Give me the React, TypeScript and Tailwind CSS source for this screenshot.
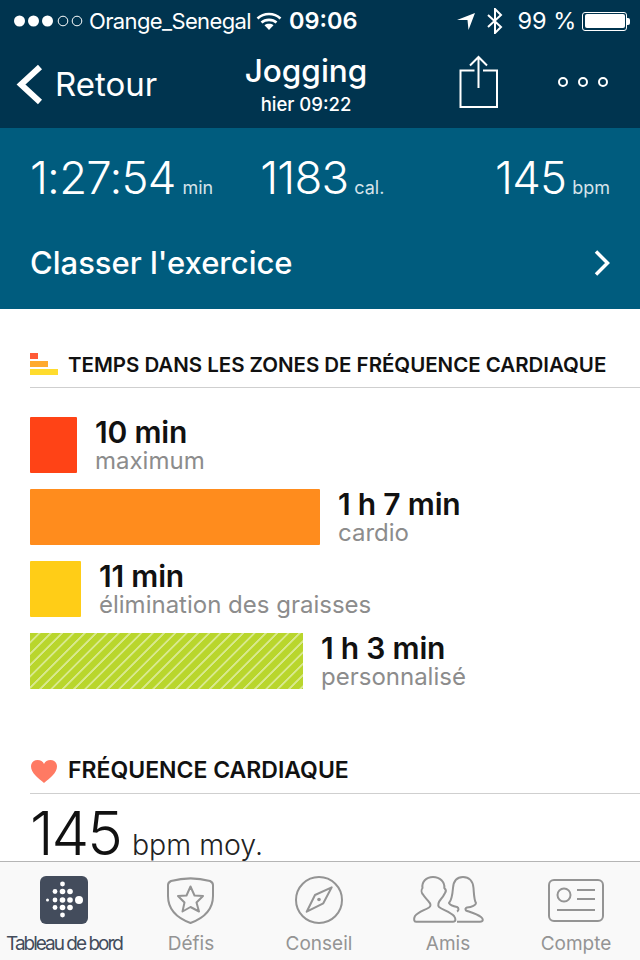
import React from "react";

const Dots = () => (
  <svg width="70" height="14" viewBox="0 0 70 14" className="shrink-0">
    {[7, 21, 35].map((x) => (<circle key={x} cx={x - 0.5} cy="7" r="5.5" fill="#fff" />))}
    {[49, 63].map((x) => (<circle key={x} cx={x + 1} cy="7" r="4.8" fill="none" stroke="#fff" strokeWidth="1" />))}
  </svg>
);

const Wifi = () => (
  <svg width="26" height="20" viewBox="0 0 26 20" className="shrink-0">
    <path d="M1.5 7.5C8 1.5 18 1.500 24.500 7.500" fill="none" stroke="#fff" strokeWidth="2.600" />
    <path d="M5.500 11.500C9.500 8 16.500 8 20.500 11.500" fill="none" stroke="#fff" strokeWidth="2.600" />
    <path d="M8.500 14.200C11 12.300 15 12.300 17.500 14.200L13 19Z" fill="#fff" />
  </svg>
);

const Zone = ({ w, color, value, label, hatch }: { w: string; color: string; value: string; label: string; hatch?: boolean }) => (
  <div className="flex items-start h-[56px]">
    <div className={`${w} h-[56px] ${color} ${hatch ? "" : "rounded-[1px]"} shrink-0`} />
    <div className="ml-[18px]">
      <div className="text-[30px] leading-[31px] font-semibold text-[#111] tracking-[-0.2px]">{value}</div>
      <div className="text-[24px] leading-[25px] text-[#8c8c8c]">{label}</div>
    </div>
  </div>
);

const TabLabel = ({ children, dark }: { children: React.ReactNode; dark?: boolean }) => (
  <div className={`text-[19px] leading-[24px] mt-[8px] whitespace-nowrap ${dark ? "text-[#434c5c] tracking-[-2px]" : "text-[#949494]"}`}>{children}</div>
);

export default function App() {
  return (
    <div className="w-[640px] h-[960px] flex flex-col overflow-hidden bg-white font-['Inter','Liberation_Sans',sans-serif]">
      <header className="bg-[#00344f] text-white h-[128px] shrink-0 px-[13px]">
        <div className="h-[42px] flex items-center">
          <Dots />
          <span className="ml-[6px] text-[22px] tracking-[-0.63px] whitespace-nowrap">Orange_Senegal</span>
          <span className="ml-[5px]"><Wifi /></span>
          <span className="ml-[7px] text-[23.500px] font-semibold">09:06</span>
          <svg width="20" height="20" viewBox="0 0 20 20" className="ml-[99px] shrink-0">
            <path d="M0 9L18 2L11.500 19L10.500 9Z" fill="#fff" />
          </svg>
          <svg width="18" height="26" viewBox="0 0 18 26" className="ml-[9px] shrink-0">
            <path d="M2 7L15 19L9 25V1L15 7L2 19" fill="none" stroke="#fff" strokeWidth="2" />
          </svg>
          <span className="ml-[14px] text-[23.500px] whitespace-nowrap">99 %</span>
          <div className="ml-[6px] flex items-center">
            <div className="w-[45px] h-[19px] rounded-[3px] border border-white p-[1.5px]">
              <div className="w-full h-full bg-white rounded-[2px]" />
            </div>
            <div className="w-[3px] h-[7px] bg-white rounded-r-[2px]" />
          </div>
        </div>
        <div className="relative h-[86px] flex items-center">
          <svg width="30" height="44" viewBox="0 0 30 44" className="ml-[2px] -mt-[1px] shrink-0">
            <path d="M25 4L6 21.500L25 39" fill="none" stroke="#fff" strokeWidth="6" />
          </svg>
          <span className="ml-[10px] text-[33px] -mt-[1px]">Retour</span>
          <div className="absolute left-[173px] w-[240px] top-[9px] text-center">
            <div className="text-[31.500px] leading-[40px] font-medium">Jogging</div>
            <div className="text-[18.500px] leading-[24px] font-medium mt-[1px]">hier 09:22</div>
          </div>
          <svg width="40" height="54" viewBox="0 0 40 54" className="absolute left-[446px] top-[13px]">
            <path d="M15.500 15.500H1.500V52H38V15.500H24" fill="none" stroke="#fff" strokeWidth="2" />
            <path d="M19.500 33V2M11 10.500L19.500 2L28 10.500" fill="none" stroke="#fff" strokeWidth="2" />
          </svg>
          <svg width="52" height="14" viewBox="0 0 52 14" className="absolute left-[544px] top-[33px]">
            {[6, 26, 46].map((x) => (<circle key={x} cx={x} cy="7" r="4" fill="none" stroke="#fff" strokeWidth="2" />))}
          </svg>
        </div>
      </header>

      <section className="bg-[#005c7e] text-white h-[181px] shrink-0 px-[30px] pt-[21px]">
        <div className="flex items-baseline h-[58px]">
          <span className="text-[45.500px] leading-[58px] font-light tracking-[-0.8px]">1:27:54</span>
          <span className="ml-[7px] text-[18px] text-[#d5e3ea]">min</span>
          <span className="ml-[47px] text-[45.500px] leading-[58px] font-light tracking-[-0.8px]">1183</span>
          <span className="ml-[6px] text-[18px] text-[#d5e3ea]">cal.</span>
          <span className="ml-auto text-[45.500px] leading-[58px] font-light tracking-[-0.8px]">145</span>
          <span className="ml-[6px] text-[18px] text-[#d5e3ea]">bpm</span>
        </div>
        <div className="flex items-center justify-between mt-[36px]">
          <span className="text-[31px] leading-[40px] font-medium">Classer l'exercice</span>
          <svg width="18" height="28" viewBox="0 0 18 28" className="mr-[-1px]">
            <path d="M3 2.500L14.500 14L3 25.500" fill="none" stroke="#fff" strokeWidth="3.500" />
          </svg>
        </div>
      </section>

      <main className="flex-1 min-h-0 overflow-hidden pl-[30px]">
        <div className="flex items-center h-[79px] pt-[34px] border-b border-[#cfcfcf]">
          <svg width="28" height="22" viewBox="0 0 28 22" className="shrink-0 mt-[-2px]">
            <rect x="0" y="0" width="8" height="6" fill="#ff5a36" />
            <rect x="0" y="8" width="18" height="6" fill="#ffaa2e" />
            <rect x="0" y="16" width="28" height="6" fill="#ffdc2e" />
          </svg>
          <h2 className="ml-[10px] text-[20.500px] font-semibold text-[#111] whitespace-nowrap tracking-[-0.03px]">TEMPS DANS LES ZONES DE FRÉQUENCE CARDIAQUE</h2>
        </div>
        <div className="flex flex-col gap-[16px] pt-[29px]">
          <Zone w="w-[47px]" color="bg-[#ff4316]" value="10 min" label="maximum" />
          <Zone w="w-[290px]" color="bg-[#ff8c1d]" value="1 h 7 min" label="cardio" />
          <Zone w="w-[51px]" color="bg-[#ffcd17]" value="11 min" label="élimination des graisses" />
          <Zone w="w-[273px]" color="bg-[repeating-linear-gradient(135deg,#b9d62c_0px,#b9d62c_5.500px,#d8e98e_6.200px,#d8e98e_7.400px,#b9d62c_8px)]" value="1 h 3 min" label="personnalisé" hatch />
        </div>
        <div className="flex items-center h-[78px] mt-[27px] pt-[32px] border-b border-[#cfcfcf]">
          <svg width="28" height="24" viewBox="0 0 28 24" className="shrink-0">
            <path d="M14 24C8 19 1 14 1 7.500C1 3.500 4 1 7.500 1C10.500 1 13 2.500 14 5C15 2.500 17.500 1 20.500 1C24 1 27 3.500 27 7.500C27 14 20 19 14 24Z" fill="#ff7a63" />
          </svg>
          <h2 className="ml-[10px] text-[23px] font-semibold text-[#111] whitespace-nowrap">FRÉQUENCE CARDIAQUE</h2>
        </div>
        <div className="flex items-baseline h-[66px]">
          <span className="text-[60px] leading-[78px] font-light text-[#111] tracking-[-2px]">145</span>
          <span className="ml-[11px] text-[28.500px] font-light text-[#222]">bpm moy.</span>
        </div>
      </main>

      <nav className="h-[99px] shrink-0 bg-[#f9f9f9] border-t border-[#b5b5b5] flex">
        <div className="w-[128px] flex flex-col items-center pt-[14px]">
          <div className="w-[48px] h-[48px] rounded-[6px] bg-[#434c5c]">
            <svg width="48" height="48" viewBox="0 0 48 48">
              {[[22.5,8,2.4],[15,15.500,2.400],[22.500,15.500,2.800],[30,15.500,2.800],[7.500,24,1.500],[15,24,2.400],[22.500,24,2.800],[30,24,2.800],[39,24,4],[15,31.500,2.400],[22.500,31.500,2.800],[30,31.500,2.800],[22.500,39,2.400]].map(([x,y,r],i)=>(<circle key={i} cx={x} cy={y} r={r} fill="#fff"/>))}
            </svg>
          </div>
          <TabLabel dark>Tableau de bord</TabLabel>
        </div>
        <div className="w-[126px] flex flex-col items-center pt-[14px]">
          <svg width="50" height="48" viewBox="0 0 50 48" fill="none" stroke="#949494" strokeWidth="2" strokeLinejoin="round">
            <path d="M2 9C2 7 3 6 5 5C18 1.500 31 1.500 44 5C46 6 47 7 47 9V20C47 33 38 42 24.500 47C11 42 2 33 2 20Z" />
            <path d="M24.500 10.500L28.500 19.500L37 20L30.500 26.500L33 35.500L24.500 31L16.500 35.500L18.500 26.500L12 20L20.500 19.500Z" />
          </svg>
          <TabLabel>Défis</TabLabel>
        </div>
        <div className="w-[130px] flex flex-col items-center pt-[14px]">
          <svg width="50" height="48" viewBox="0 0 50 48" fill="none" stroke="#949494" strokeWidth="2" strokeLinejoin="round">
            <circle cx="25" cy="24" r="23" />
            <path d="M37.700 11.300L29.300 27.300L12.700 35.700L21 19Z" />
            <circle cx="25" cy="23.500" r="1.800" fill="#949494" stroke="none" />
          </svg>
          <TabLabel>Conseil</TabLabel>
        </div>
        <div className="w-[128px] flex flex-col items-center pt-[14px]">
          <svg width="72" height="48" viewBox="0 0 72 48" fill="none" stroke="#949494" strokeWidth="2" strokeLinejoin="round">
            <path d="M4 45.700H41C44 45.700 44 43 42 40C38.500 36 31 34 27 31C25.500 29 26.500 26 29 23C31 21 32 19 33 17C34.500 15 33.500 13 32.300 12C33 6 28 1 21 1C14 1 9.500 6 10.500 12C9 14 9.500 17 11 18.500C12.500 21 14.500 23 17 26C19 28 19 30 17 31.500C12 34.500 6 36 3 40C1.500 43 2 45.700 4 45.700Z" />
            <path d="M45 45.700H68C71.500 45.700 71.500 43 69 41C65 38 58 36 54 34.500C53 33 53.500 32 55 31.500C60 31 64 29 64 27C62 24 62 18 61.500 12C61 5 57 1 51 1C45 1 41.500 5 41 12C40.500 18 40 24 37 27C38 29 42 30.500 45 31C47 32 47 34.500 45 35.500" />
          </svg>
          <TabLabel>Amis</TabLabel>
        </div>
        <div className="w-[128px] flex flex-col items-center pt-[14px]">
          <svg width="56" height="48" viewBox="0 0 56 48" fill="none" stroke="#949494" strokeWidth="2">
            <rect x="1" y="4" width="54" height="41" rx="5" />
            <circle cx="16" cy="19" r="6.500" />
            <path d="M29 14H47M29 23H47M9 34H47" />
          </svg>
          <TabLabel>Compte</TabLabel>
        </div>
      </nav>
    </div>
  );
}
